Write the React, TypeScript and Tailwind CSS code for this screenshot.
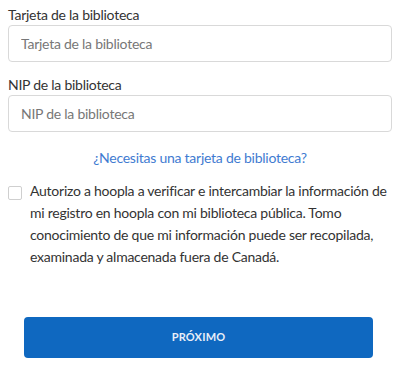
export default function App() {
  return (
    <div className="w-[400px] h-[366px] bg-white text-[#333333] font-['Lato',sans-serif] tracking-[-0.25px]">
      <div className="px-2 pt-[6px]">
        <label className="block text-[14px] leading-[18px]">Tarjeta de la biblioteca</label>
        <input
          className="mt-[1px] block w-full h-[37px] rounded-[4px] border border-[#d9d9d9] px-3 text-[14px] placeholder:text-[#777777] outline-none"
          placeholder="Tarjeta de la biblioteca"
        />
        <label className="mt-[14px] block text-[14px] leading-[18px]">NIP de la biblioteca</label>
        <input
          className="mt-[1px] block w-full h-[37px] rounded-[4px] border border-[#d9d9d9] px-3 text-[14px] placeholder:text-[#777777] outline-none"
          placeholder="NIP de la biblioteca"
        />
        <div className="mt-[13px] text-center">
          <a className="text-[14px] leading-[18px] text-[#3f7bd1]">¿Necesitas una tarjeta de biblioteca?</a>
        </div>
        <div className="mt-[11px] flex gap-2">
          <span className="mt-[6px] block w-[14px] h-[14px] shrink-0 rounded-[2px] border border-[#cfcfcf]"></span>
          <p className="text-[14px] leading-[22px]">
            Autorizo a hoopla a verificar e intercambiar la información de mi registro en hoopla con mi biblioteca pública. Tomo conocimiento de que mi información puede ser recopilada, examinada y almacenada fuera de Canadá.
          </p>
        </div>
      </div>
      <div className="pl-6 mt-[49px]">
        <button className="w-[349px] h-[41px] rounded-[4px] bg-[#0f68c0] text-[11px] font-bold tracking-[0.2px] text-[#e8eef8]">
          PRÓXIMO
        </button>
      </div>
    </div>
  );
}
